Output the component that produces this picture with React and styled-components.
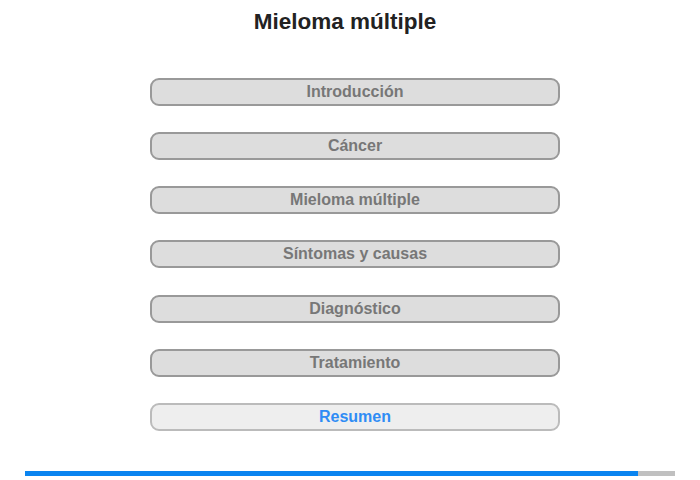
import styled, { createGlobalStyle } from "styled-components";

const Global = createGlobalStyle`
  body {
    margin: 0;
    background: #fff;
    font-family: "Liberation Sans", Arial, sans-serif;
  }
`;

const Page = styled.div`
  width: 700px;
  height: 480px;
  display: flex;
  flex-direction: column;
  align-items: center;
`;

const Title = styled.h1`
  margin: 10px 0 0 -10px;
  font-size: 22.5px;
  line-height: 24px;
  font-weight: bold;
  color: #222;
`;

const Menu = styled.div`
  margin: 44px 0 0 10px;
  display: flex;
  flex-direction: column;
  gap: 26.17px;
`;

const Item = styled.div`
  box-sizing: border-box;
  width: 410px;
  height: 28px;
  border: 2px solid ${(p) => (p.$current ? "#bbb" : "#999")};
  border-radius: 9px;
  background: ${(p) => (p.$current ? "#eee" : "#ddd")};
  color: ${(p) => (p.$current ? "#2f8cf5" : "#777")};
  font-size: 16px;
  font-weight: bold;
  display: flex;
  align-items: center;
  justify-content: center;
`;

const Progress = styled.div`
  margin-top: auto;
  margin-bottom: 4px;
  width: 650px;
  height: 5px;
  background: #c0c0c0;
  display: flex;
`;

const Fill = styled.div`
  height: 100%;
  background: #0a84f0;
`;

const items = [
  "Introducción",
  "Cáncer",
  "Mieloma múltiple",
  "Síntomas y causas",
  "Diagnóstico",
  "Tratamiento",
  "Resumen",
];

export default function App() {
  return (
    <Page>
      <Global />
      <Title>Mieloma múltiple</Title>
      <Menu>
        {items.map((t, i) => (
          <Item key={t} $current={i === items.length - 1}>
            {t}
          </Item>
        ))}
      </Menu>
      <Progress>
        <Fill style={{ width: `${(613 / 650) * 100}%` }} />
      </Progress>
    </Page>
  );
}
